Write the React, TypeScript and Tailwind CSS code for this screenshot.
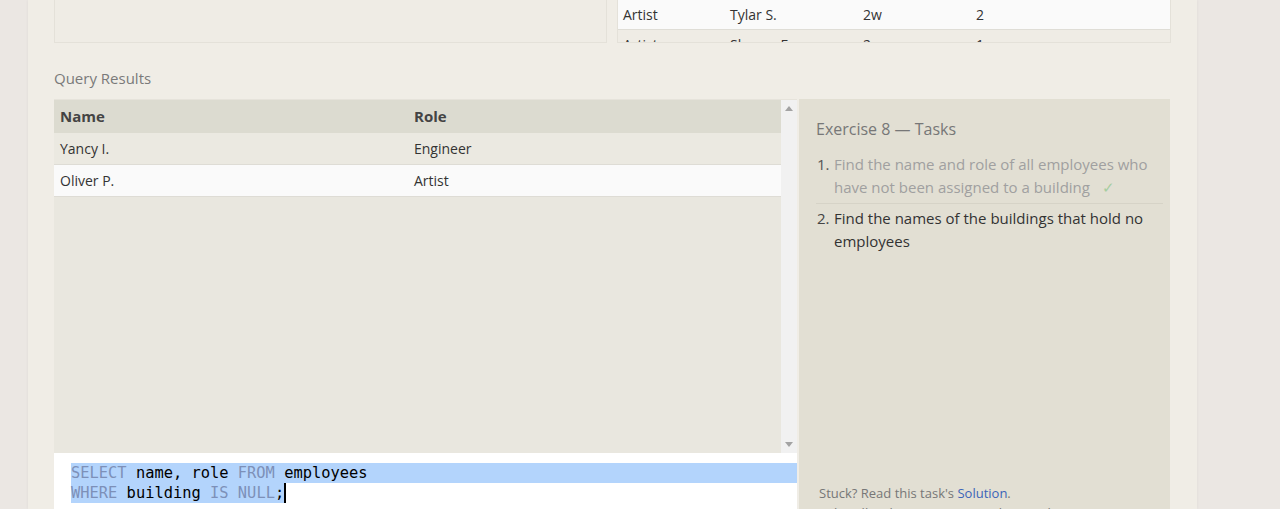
const topRow = { role: "Artist", name: "Tylar S.", building: "2w", years: "2" };

const results = [
  { name: "Yancy I.", role: "Engineer" },
  { name: "Oliver P.", role: "Artist" },
];

const Kw = ({ children }: { children: React.ReactNode }) => (
  <span className="text-[#7d90b8]">{children}</span>
);

export default function App() {
  return (
    <div
      className="h-[509px] overflow-hidden bg-[#ebe7e3]"
      style={{ fontFamily: '"Open Sans", "Noto Sans", sans-serif' }}
    >
      <div className="ml-[28px] h-full w-[1169px] bg-[#f0ede6] px-[26px] shadow-[0_0_3px_rgba(0,0,0,0.06)]">
        {/* previous exercise area (scrolled up) */}
        <div className="flex gap-[10px]">
          <div className="h-[43px] w-[553px] border border-t-0 border-[#e4e1d9] bg-[#efece5]" />
          <div className="h-[43px] w-[554px] overflow-hidden border border-t-0 border-[#e4e1d9] bg-[#efece5]">
            <div className="flex h-[30px] items-center border-b border-[#dfddd6] bg-[#fafafa] text-[14px] text-[#333]">
              <span className="w-[112px] pl-[5px]">{topRow.role}</span>
              <span className="w-[133px]">{topRow.name}</span>
              <span className="w-[113px]">{topRow.building}</span>
              <span>{topRow.years}</span>
            </div>
            <div className="flex h-[29px] items-center text-[14px] text-[#333]">
              <span className="w-[112px] pl-[5px]">Artist</span>
              <span className="w-[133px]">Sharon F.</span>
              <span className="w-[113px]">2</span>
              <span>1</span>
            </div>
          </div>
        </div>

        <div className="pt-[24px] pb-[10px] text-[15px] leading-[22px] text-[#7a7a7a]">Query Results</div>

        <div className="flex gap-[2px]">
          <div className="flex w-[743px] flex-col">
            <div className="flex h-[354px] border-t border-[#e6e3db]">
              <div className="w-[727px] bg-[#e9e7df]">
                <div className="flex h-[33px] items-center bg-[#dcdbd0] text-[15px] font-bold text-[#444]">
                  <span className="w-[360px] pl-[6px]">Name</span>
                  <span>Role</span>
                </div>
                {results.map((r, i) => (
                  <div
                    key={r.name}
                    className={`flex h-[32px] items-center border-b border-[#dedcd5] text-[14px] text-[#333] ${
                      i % 2 === 0 ? "bg-[#ebe9e1]" : "bg-[#fafafa]"
                    }`}
                  >
                    <span className="w-[360px] pl-[6px]">{r.name}</span>
                    <span>{r.role}</span>
                  </div>
                ))}
              </div>
              <div className="flex w-[16px] flex-col items-center justify-between bg-[#f1f1f1] py-[6px]">
                <svg width="8" height="5" viewBox="0 0 8 5">
                  <path d="M0 5 L4 0 L8 5 Z" fill="#a3a3a3" />
                </svg>
                <svg width="8" height="5" viewBox="0 0 8 5">
                  <path d="M0 0 L8 0 L4 5 Z" fill="#a3a3a3" />
                </svg>
              </div>
            </div>
            <div
              className="h-[60px] bg-white pt-[10px] text-[15.4px] leading-[20px] text-black"
              style={{ fontFamily: '"DejaVu Sans Mono", monospace' }}
            >
              <div className="ml-[17px] bg-[#b3d4fc] whitespace-pre">
                <Kw>SELECT</Kw> name, role <Kw>FROM</Kw> employees
              </div>
              <div className="ml-[17px] flex items-center whitespace-pre">
                <span className="bg-[#b3d4fc]">
                  <Kw>WHERE</Kw> building <Kw>IS</Kw> <Kw>NULL</Kw>;
                </span>
                <span className="h-[20px] w-[2px] bg-black" />
              </div>
            </div>
          </div>

          <div className="flex h-[430px] w-[371px] flex-col bg-[#e2dfd3] pl-[17px] pr-[7px] pt-[18px]">
            <div className="text-[16px] leading-[24px] text-[#777]">Exercise 8 — Tasks</div>
            <ol className="mt-[12px] text-[15px] leading-[23px]">
              <li className="flex border-b border-[#d6d3c7] pb-[4px]">
                <span className="w-[18px] shrink-0 pl-[1px] text-[#555]">1.</span>
                <span className="text-[#a0a0a0]">
                  Find the name and role of all employees who have not been assigned to a building
                  <span className="ml-[12px] text-[#a6cda0]">✓</span>
                </span>
              </li>
              <li className="flex pt-[3px]">
                <span className="w-[18px] shrink-0 pl-[1px] text-[#444]">2.</span>
                <span className="text-[#333]">Find the names of the buildings that hold no employees</span>
              </li>
            </ol>
            <div className="mt-auto pl-[3px] text-[13px] leading-[20px] text-[#777]">
              <div>
                Stuck? Read this task's <span className="text-[#3b64b8]">Solution</span>.
              </div>
              <div>Solve all tasks to continue to the next lesson.</div>
            </div>
            <div className="h-[6px]" />
          </div>
        </div>
      </div>
    </div>
  );
}
